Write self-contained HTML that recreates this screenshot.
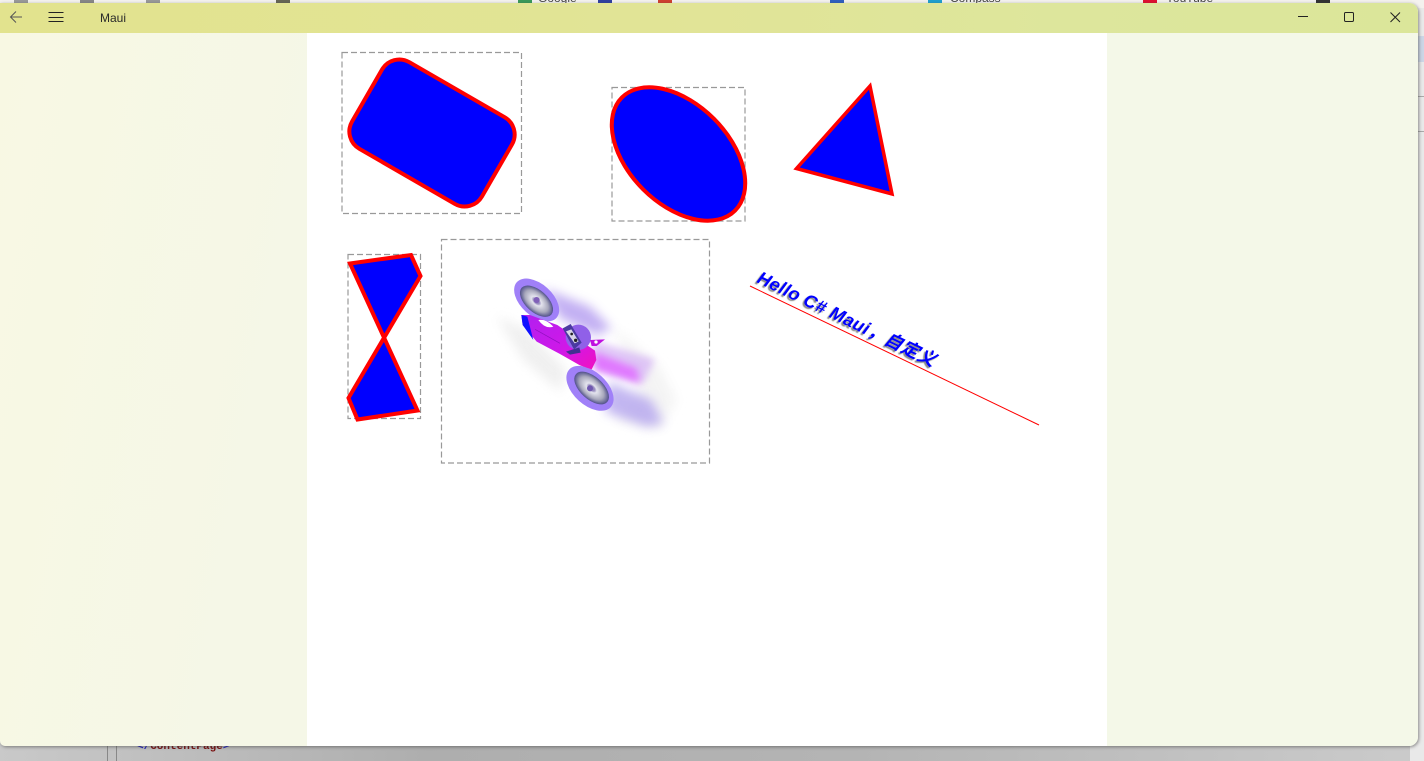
<!DOCTYPE html>
<html><head><meta charset="utf-8"><title>Maui</title>
<style>
html,body{margin:0;padding:0;width:1424px;height:761px;overflow:hidden;background:#bbb;font-family:"Liberation Sans","Noto Sans CJK SC",sans-serif}
.abs{position:absolute}
#bottom{left:0;top:740px;width:1424px;height:21px;background:linear-gradient(90deg,#c9c9c9,#aeaeae 30%,#b4b4b4 60%,#cbcbcb)}
#right{left:1410px;top:0;width:14px;height:761px;background:#e9e9e9}
#top{left:0;top:0;width:1424px;height:8px;background:#f4f2ee;overflow:hidden}
#top span{position:absolute;top:-9px;font-size:12px;color:#444;white-space:nowrap}
#top i{position:absolute;top:0;height:3px;width:14px}
#win{left:0;top:3px;width:1418px;height:743px;border-radius:0 9px 9px 5px;overflow:hidden;box-shadow:1px 1px 3px rgba(60,60,60,.55);background:linear-gradient(100deg,#f8f8e3,#f5f7e7 22%,#f4f8e8)}
#bar{left:0;top:0;width:1418px;height:30px;background:linear-gradient(90deg,#e2e38e,#e1e497 50%,#dde69c 75%,#dbe69a)}
#t{left:100px;top:8px;font-size:12px;line-height:14px;color:#2a2a2a}
#page{left:307px;top:30px;width:800px;height:713px;background:#fff}
#hello{left:756px;top:266px;font:italic bold 18px/20px "Liberation Sans","Noto Sans CJK SC",sans-serif;letter-spacing:.35px;color:#0000ff;white-space:nowrap;transform-origin:0 16px;transform:rotate(25.7deg);text-shadow:-1px 2px 1px #8a8a8a}
</style></head><body>
<div class="abs" id="bottom"></div>
<div class="abs" style="left:107px;top:746px;width:1px;height:15px;background:#888"></div>
<div class="abs" style="left:116px;top:746px;width:1px;height:15px;background:#888"></div>
<div class="abs" style="left:137px;top:740px;font:bold 11px/14px 'Liberation Mono',monospace;color:#7a1010;white-space:nowrap"><span style="color:#2020c0">&lt;/</span>ContentPage<span style="color:#2020c0">&gt;</span></div>
<div class="abs" id="right"></div>
<div class="abs" style="left:1418px;top:36px;width:6px;height:26px;background:#ccd6e6"></div>
<div class="abs" style="left:1418px;top:96px;width:6px;height:1px;background:#aaa"></div>
<div class="abs" style="left:1418px;top:131px;width:6px;height:1px;background:#aaa"></div>
<div class="abs" id="top">
<i style="left:14px;background:#999"></i><i style="left:80px;background:#888"></i><i style="left:146px;background:#999"></i><i style="left:276px;background:#665"></i><i style="left:518px;background:#3a9a5a"></i><i style="left:598px;background:#3040a0"></i><i style="left:658px;background:#d04030"></i><i style="left:830px;background:#3060c0"></i><i style="left:928px;background:#20a0d0"></i><i style="left:1143px;background:#e01030"></i><i style="left:1316px;background:#333"></i>
<span style="left:538px">Google</span><span style="left:950px">Compass</span><span style="left:1166px">YouTube</span>
</div>
<div class="abs" id="win">
<div class="abs" id="bar"></div>
<div class="abs" id="t">Maui</div>
<div class="abs" id="page"></div>
</div>
<svg class="abs" style="left:0;top:0" width="1424" height="761" viewBox="0 0 1424 761">
<defs>
<filter id="b6" x="-40%" y="-40%" width="180%" height="180%"><feGaussianBlur stdDeviation="16"/></filter>
<filter id="b3" x="-40%" y="-40%" width="180%" height="180%"><feGaussianBlur stdDeviation="11"/></filter>
<radialGradient id="hub"><stop offset="0" stop-color="#8a70c0"/><stop offset=".18" stop-color="#9a90c0"/><stop offset=".3" stop-color="#e4e4ee"/><stop offset=".7" stop-color="#a8a8bc"/><stop offset="1" stop-color="#50508a"/></radialGradient>
<linearGradient id="bod" x1="0" y1="0" x2="1" y2="1"><stop offset="0" stop-color="#b020f0"/><stop offset=".6" stop-color="#d018e8"/><stop offset="1" stop-color="#f010c0"/></linearGradient>
</defs>
<!-- title bar icons -->
<g fill="none" stroke="#555" stroke-width="1">
<path d="M10.500 17H22M16 11.500L10.500 17L16 22.500"/>
</g>
<g fill="none" stroke="#222" stroke-width="1">
<path d="M48.500 12.500H63.500M48.500 17.500H63.500M48.500 21.500H63.500"/>
<path d="M1298 16.500H1308"/>
<rect x="1344.500" y="12.500" width="9" height="9" rx="1.200"/>
<path d="M1390.500 12.500L1400 22M1400 12.500L1390.500 22"/>
</g>
<!-- dashed bounds -->
<g fill="none" stroke="#999" stroke-width="1.200" stroke-dasharray="6 3">
<rect x="342" y="52.500" width="179.500" height="161"/>
<rect x="612" y="87.500" width="133" height="133.500"/>
<rect x="348" y="254.500" width="72.500" height="164"/>
<rect x="441.500" y="239.500" width="268" height="223.500"/>
</g>
<!-- shapes -->
<g fill="#0000ff" stroke="#ff0000" stroke-width="4">
<rect x="357" y="83" width="150" height="100" rx="20" ry="20" transform="rotate(30 432 133)"/>
<ellipse cx="678.500" cy="154" rx="80" ry="50" transform="rotate(45 678.500 154)"/>
<path d="M796.500 168.500L870 86L892 194Z" stroke-width="3.500"/>
<path d="M350 263.500L411 255L420.500 276L348.500 398L357.500 419.500L417.500 410.500Z"/>
</g>
<!-- plane, coordinates in 3x crop space -->
<g transform="translate(480 260) scale(.33333)">
<path d="M50 170L135 205L260 330L240 395L130 300Z" fill="#ececec" filter="url(#b6)" opacity=".8"/>
<path d="M400 200L540 320L590 420L540 510L400 480L480 400Z" fill="#f0f0f0" filter="url(#b6)" opacity=".7"/>
<path d="M190 85L330 140L395 205L350 225L240 175Z" fill="#b49cf0" filter="url(#b6)" opacity=".8"/>
<path d="M335 240L525 298L490 370L345 325Z" fill="#d8b8f5" filter="url(#b3)" opacity=".8"/>
<path d="M340 275L470 325L480 370L345 330Z" fill="#e070ff" filter="url(#b3)" opacity=".9"/>
<path d="M385 365L515 420L550 490L500 500L375 455Z" fill="#b4a4ee" filter="url(#b6)" opacity=".8"/>
<g transform="rotate(42 170 120)">
<ellipse cx="170" cy="120" rx="80" ry="48" fill="#a080f8"/>
<ellipse cx="172" cy="123" rx="60" ry="33" fill="url(#hub)"/>
<ellipse cx="170" cy="120" rx="9" ry="9" fill="#8060b8"/>
</g>
<g transform="rotate(42 330 385)">
<ellipse cx="330" cy="385" rx="84" ry="50" fill="#a080f8"/>
<ellipse cx="333" cy="381" rx="63" ry="34" fill="url(#hub)"/>
<ellipse cx="330" cy="385" rx="9" ry="9" fill="#7058b0"/>
</g>
<path d="M124 165L150 165L232 195L345 272L349 300L335 328L300 316L240 282L170 245L128 195Z" fill="url(#bod)"/>
<path d="M124 165L142 170L160 240L128 195Z" fill="#1010ff"/>
<path d="M175 180Q198 176 220 200Q195 208 175 180Z" fill="#fff"/>
<path d="M165 208L240 250" stroke="#9010c0" stroke-width="2"/>
<circle cx="295" cy="232" r="38" fill="#9060e8"/>
<path d="M248 205L272 192L305 248L282 268Z" fill="#4a3aa0"/>
<path d="M258 214L274 208L296 244L284 250Z" fill="#d8d4e8"/>
<circle cx="275" cy="222" r="4" fill="#222"/>
<circle cx="287" cy="241" r="5" fill="#222"/>
<path d="M258 275L298 262L302 278L270 284Z" fill="#403090"/>
<path d="M330 240L375 238L350 258L335 258Z" fill="#c010e0"/>
<circle cx="348" cy="246" r="5" fill="#fff"/>
</g>
<line x1="750" y1="286" x2="1039" y2="425" stroke="#ff0000" stroke-width="1"/>
</svg>
<div class="abs" id="hello">Hello C# Maui，自定义</div>
</body></html>
